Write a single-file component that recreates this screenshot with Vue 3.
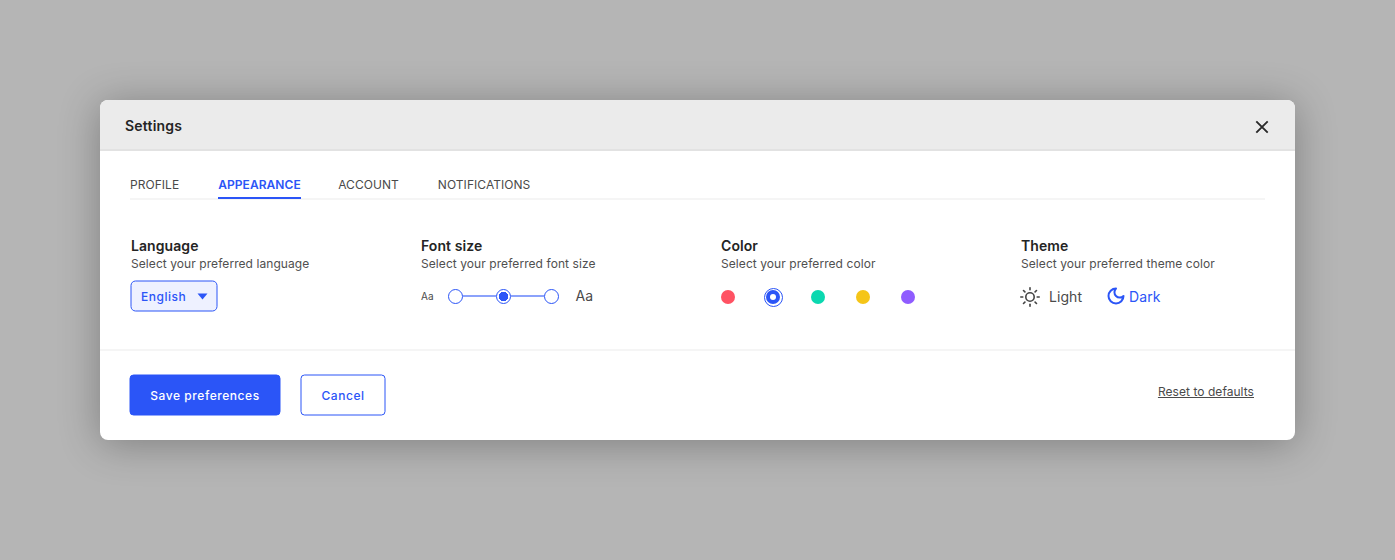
<script setup>
const tabs = ['PROFILE', 'APPEARANCE', 'ACCOUNT', 'NOTIFICATIONS']
const colors = ['#ff5263', '#2b55f7', '#0bd8b0', '#f5c518', '#8f5cff']
const rays = [0, 45, 90, 135, 180, 225, 270, 315]
</script>

<template>
  <div class="page">
    <section class="modal">
      <header class="head">
        <h1>Settings</h1>
        <button class="close" aria-label="Close">
          <svg width="16" height="16" viewBox="0 0 16 16"><path d="M2.3 2.3l11.4 11.4M13.7 2.3l-11.4 11.4" stroke="#2a2a2a" stroke-width="1.9" fill="none"/></svg>
        </button>
      </header>
      <div class="body">
        <nav class="tabs">
          <a v-for="t in tabs" :key="t" class="tab" :class="{ on: t === 'APPEARANCE' }">{{ t }}</a>
        </nav>
        <div class="grid">
          <div class="col">
            <h2>Language</h2>
            <p>Select your preferred language</p>
            <div class="ctl">
              <div class="select"><span>English</span><i class="caret"></i></div>
            </div>
          </div>
          <div class="col">
            <h2>Font size</h2>
            <p>Select your preferred font size</p>
            <div class="ctl">
              <span class="aa-s">Aa</span>
              <div class="slider">
                <i class="knob"></i><i class="rail"></i>
                <i class="knob active"></i><i class="rail"></i>
                <i class="knob"></i>
              </div>
              <span class="aa-l">Aa</span>
            </div>
          </div>
          <div class="col">
            <h2>Color</h2>
            <p>Select your preferred color</p>
            <div class="ctl swatches">
              <span v-for="(c, i) in colors" :key="c" class="slot">
                <i class="dot" :class="{ picked: i === 1 }" :style="{ background: c }"></i>
              </span>
            </div>
          </div>
          <div class="col">
            <h2>Theme</h2>
            <p>Select your preferred theme color</p>
            <div class="ctl themes">
              <span class="theme light">
                <svg width="20" height="20" viewBox="0 0 20 20" fill="none" stroke="#444" stroke-width="1.6">
                  <circle cx="10" cy="10" r="4.2"/>
                  <path v-for="r in rays" :key="r" d="M10 0.8v2" stroke-linecap="round" :transform="`rotate(${r} 10 10)`"/>
                </svg>
                Light
              </span>
              <span class="theme dark">
                <svg width="20" height="20" viewBox="0 0 24 24" fill="none" stroke="#2b55f7" stroke-width="2.4">
                  <path d="M12 3a6 6 0 0 0 9 9 9 9 0 1 1-9-9Z" stroke-linejoin="round"/>
                </svg>
                Dark
              </span>
            </div>
          </div>
        </div>
      </div>
      <footer class="foot">
        <button class="btn primary">Save preferences</button>
        <button class="btn ghost">Cancel</button>
        <a class="reset">Reset to defaults</a>
      </footer>
    </section>
  </div>
</template>

<style>
html, body { margin: 0; background: #b5b5b5; }
</style>

<style scoped>
.page {
  width: 1395px;
  height: 560px;
  box-sizing: border-box;
  padding: 100px;
  background: #b5b5b5;
  font-family: Inter, "Liberation Sans", sans-serif;
  color: #242424;
  overflow: hidden;
}
.modal {
  width: 1195px;
  height: 340px;
  background: #fff;
  border-radius: 8px;
  box-shadow: 0 4px 40px rgba(0, 0, 0, 0.3);
  overflow: hidden;
  display: flex;
  flex-direction: column;
}
.head {
  height: 51px;
  box-sizing: border-box;
  flex: none;
  display: flex;
  align-items: center;
  justify-content: space-between;
  padding: 0 25px;
  background: #ebebeb;
  border-bottom: 2px solid #e2e2e2;
}
h1 { margin: 0; font-size: 14px; font-weight: 600; line-height: 52px; letter-spacing: 0.2px; padding-top: 2px; }
.close { border: 0; background: none; padding: 0; display: flex; margin-top: 5px; }
.body { padding: 0 30px; flex: 1; }
.tabs {
  margin-top: 24px;
  height: 25px;
  box-sizing: border-box;
  display: flex;
  border-bottom: 2px solid #f5f5f5;
  font-size: 12px;
  color: #4a4a4a;
  letter-spacing: 0.05px;
}
.tab { height: 24px; box-sizing: border-box; line-height: 20px; margin-right: 39px; border-bottom: 2px solid transparent; flex: none; }
.tab.on { color: #2b55f7; font-weight: 600; border-bottom-color: #2b55f7; margin-right: 37.5px; }
.grid { display: grid; grid-template-columns: 290px 300px 300px 1fr; padding: 37px 0 0 1px; }
h2 { margin: 0; font-size: 14px; line-height: 17px; font-weight: 600; letter-spacing: 0.08px; }
p { margin: 2px 0 0; font-size: 12px; line-height: 15px; color: #4f4f4f; letter-spacing: 0.07px; }
.ctl { margin-top: 10px; height: 30px; display: flex; align-items: center; }
.select {
  width: 87px;
  height: 31px;
  box-sizing: border-box;
  align-self: flex-start;
  transform: translate(-0.5px, -0.5px);
  display: flex;
  align-items: center;
  justify-content: space-between;
  padding: 0 9.5px;
  background: #eef1ff;
  border: 1px solid #2b55f7;
  border-radius: 5px;
  color: #2b55f7;
  font-size: 12px;
  font-weight: 500;
  letter-spacing: 0.5px;
}
.caret { width: 0; height: 0; border: 5px solid transparent; border-top: 6px solid #2b55f7; border-bottom: 0; margin-top: 1px; }
.aa-s { font-size: 10px; color: #4a4a4a; width: 27px; }
.aa-l { font-size: 14px; color: #4a4a4a; margin-left: 16.5px; margin-bottom: 2px; }
.slider { display: flex; align-items: center; }
.knob { width: 15px; height: 15px; box-sizing: border-box; border: 1px solid #2b55f7; border-radius: 50%; background: #fff; flex: none; }
.knob.active { background: radial-gradient(circle, #2b55f7 0 4.5px, #fff 5px); }
.rail { width: 33px; height: 2px; background: #8ba2fb; }
.swatches { padding-top: 2px; box-sizing: border-box; }
.slot { width: 45px; display: flex; }
.dot { width: 14px; height: 14px; border-radius: 50%; display: block; position: relative; }
.dot.picked::before { content: ""; position: absolute; inset: -2.5px; border: 1px solid #2b55f7; border-radius: 50%; }
.dot.picked::after { content: ""; position: absolute; inset: 4px; background: #fff; border-radius: 50%; }
.themes { gap: 24px; }
.theme { display: flex; align-items: center; font-size: 14px; color: #4a4a4a; letter-spacing: 0.07px; }
.light svg { margin: 1px 9px 0 -1px; }
.dark { color: #2b55f7; }
.dark svg { margin-right: 3px; }
.foot {
  height: 91px;
  flex: none;
  box-sizing: border-box;
  border-top: 2px solid #f5f5f5;
  display: flex;
  align-items: center;
  padding: 0 41px 0 30px;
  gap: 20px;
}
.btn { height: 41px; border-radius: 4px; font: 500 12px Inter, sans-serif; letter-spacing: 0.55px; box-sizing: border-box; padding: 0; transform: translate(-0.5px, -0.5px); }
.primary { width: 151px; background: #2b55f7; border: 1px solid #2b55f7; color: #fff; }
.ghost { width: 85px; background: #fff; border: 1px solid #2b55f7; color: #2b55f7; }
.reset { margin-left: auto; margin-bottom: 9px; font-size: 12px; color: #4a4a4a; text-decoration: underline; letter-spacing: 0.05px; }
</style>
